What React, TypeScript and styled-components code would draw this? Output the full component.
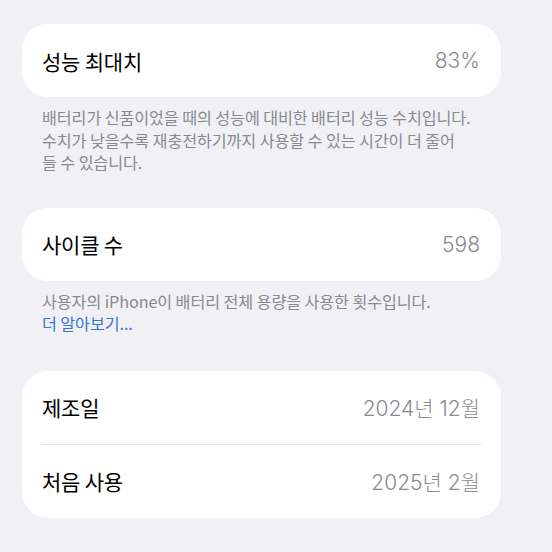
import styled, { createGlobalStyle } from "styled-components";

const GlobalStyle = createGlobalStyle`
  html, body {
    margin: 0;
    padding: 0;
    background: #f0f0f5;
  }
  body {
    font-family: Inter, "Noto Sans CJK KR", sans-serif;
    -webkit-font-smoothing: antialiased;
  }
`;

const Page = styled.div`
  width: 552px;
  height: 552px;
  box-sizing: border-box;
  padding: 24px 51px 0 22px;
  background: #f0f0f5;
  overflow: hidden;
`;

const Section = styled.div<{ $gap?: number }>`
  margin-bottom: ${({ $gap }) => $gap ?? 34}px;
`;

const Card = styled.div`
  background: #fff;
  border-radius: 26px;
  overflow: hidden;
`;

const Row = styled.div`
  height: 73px;
  display: flex;
  align-items: center;
  justify-content: space-between;
  padding: 0 21px 0 20px;
`;

const Label = styled.div`
  color: #000;
  font-family: "Noto Sans CJK KR", sans-serif;
  font-size: 21px;
  font-weight: 400;
  letter-spacing: -0.2px;
`;

const Value = styled.div`
  color: #8a8a8e;
  font-family: Inter, "Noto Sans CJK KR", sans-serif;
  font-size: 21px;
  font-weight: 300;
`;

const Divider = styled.div`
  height: 1px;
  margin: 0 20px;
  background: #e2e2e6;
`;

const Footer = styled.div`
  padding: 9px 20px 0 20px;
  color: #8a8a8e;
  font-family: "Noto Sans CJK KR", sans-serif;
  font-size: 16.2px;
  line-height: 22.5px;
  letter-spacing: -0.1px;
  white-space: nowrap;
`;

const Link = styled.div`
  color: #3478d4;
`;

const App = () => {
  return (
    <>
      <GlobalStyle />
      <Page>
        <Section>
          <Card>
            <Row>
              <Label>성능 최대치</Label>
              <Value>83%</Value>
            </Row>
          </Card>
          <Footer>
            배터리가 신품이었을 때의 성능에 대비한 배터리 성능 수치입니다.
            <br />
            수치가 낮을수록 재충전하기까지 사용할 수 있는 시간이 더 줄어
            <br />들 수 있습니다.
          </Footer>
        </Section>
        <Section $gap={36}>
          <Card>
            <Row>
              <Label>사이클 수</Label>
              <Value>598</Value>
            </Row>
          </Card>
          <Footer>
            사용자의 iPhone이 배터리 전체 용량을 사용한 횟수입니다.
            <Link>더 알아보기...</Link>
          </Footer>
        </Section>
        <Card>
          <Row>
            <Label>제조일</Label>
            <Value>2024년 12월</Value>
          </Row>
          <Divider />
          <Row>
            <Label>처음 사용</Label>
            <Value>2025년 2월</Value>
          </Row>
        </Card>
      </Page>
    </>
  );
};

export default App;
